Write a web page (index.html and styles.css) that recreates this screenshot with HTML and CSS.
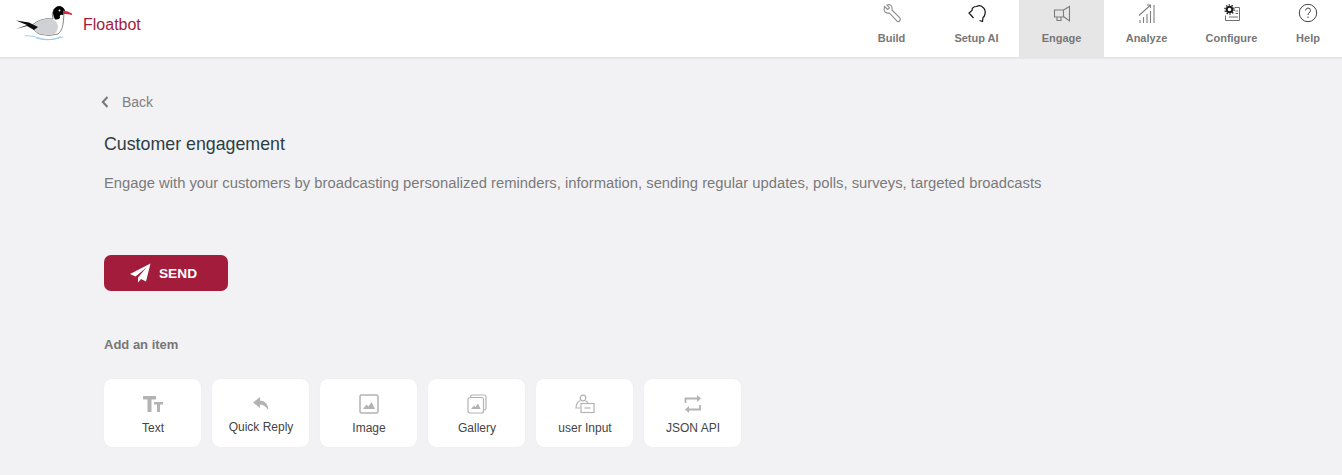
FILE: index.html
```html
<!DOCTYPE html>
<html lang="en">
<head>
<meta charset="utf-8">
<title>Floatbot</title>
<link rel="stylesheet" href="styles.css">
</head>
<body>
<header class="topbar">
  <div class="brand">
    <svg class="logo" width="58" height="42" viewBox="0 0 58 42">
      <path d="M38 19 Q36 14 39 9 L49 9 Q49 15 48.500 20 Q48 30 43 34 Q34 37 24 34 Q19 31 16 26 Q26 17 38 19 Z" fill="#fff" stroke="#555" stroke-width=".7"/>
      <path d="M17 27 Q24 18 35 19 Q42 20 43 26 Q43 31 39 34 Q33 36 26 34 Q20 32 17 27 Z" fill="#cfd1d4"/>
      <path d="M1 20.500 L14 22.500 L23 27 L19 30 L12 26 L1 29 L12 25 L7 23 Z" fill="#0c0c0c"/>
      <path d="M40 19.500 Q37 14 38.500 10 Q41 5.500 45 6 Q49 7 50 11 L48 15 Q44 14 45 18 Q43 20 40 19.500 Z" fill="#000"/>
      <circle cx="44.500" cy="10.500" r=".9" fill="#fff"/>
      <path d="M48 10.500 Q53 11 57 13.500 L57 15 Q52 13.500 48 14 Z" fill="#d92b3f"/>
      <path d="M10 35.500 Q20 36 26 38.500 Q36 41.500 46 36.500 M21 38 Q32 42 48 37" fill="none" stroke="#9cc8e6" stroke-width=".9"/>
    </svg>
    <span class="brand-name">Floatbot</span>
  </div>
  <nav class="nav">
    <a class="nav-item">
      <svg width="20" height="20" viewBox="0 0 20 20" fill="none" stroke="#8e8e8e" stroke-width="1.100">
        <path d="M2.500 3.500 L5.500 6.500 L7.500 5 L5 2 Q8 1 9.500 3 Q10.500 5 10 7 L18 15 Q19 17 17 18.500 Q15.500 19 15 18 L7.500 10 Q5 10.500 3 9 Q1.500 7 2.500 3.500 Z"/>
      </svg>
      <span>Build</span>
    </a>
    <a class="nav-item">
      <svg width="20" height="20" viewBox="0 0 20 20" fill="none" stroke="#151515" stroke-width="1.200">
        <path d="M6.500 15 L2 10 L5 7.500 Q5 3.500 9.500 3.500 Q13 1.500 15.500 4 Q19 6.500 18 11 Q17.500 13.500 16 14.500 L15.500 18.500 L12.500 17.500"/>
      </svg>
      <span>Setup AI</span>
    </a>
    <a class="nav-item is-active">
      <svg width="20" height="20" viewBox="0 0 20 20" fill="none" stroke="#7c7c7c" stroke-width="1.100">
        <path d="M2.500 7 H11.500 V14 H2.500 Z M5 14 V17.500 H9 V14 M11.500 7 L17.500 3.500 V18 L11.500 13.500"/>
      </svg>
      <span>Engage</span>
    </a>
    <a class="nav-item">
      <svg width="20" height="20" viewBox="0 0 20 20" fill="none" stroke="#808080" stroke-width="1.100">
        <path d="M2 12.500 L13 2.500 M10 2 H13.500 V5 M3 20 V17 M6.500 20 V14 M10 20 V11 M13.500 20 V8 M17 20 V2 " />
      </svg>
      <span>Analyze</span>
    </a>
    <a class="nav-item">
      <svg width="18" height="18" viewBox="0 0 18 18">
        <circle cx="6.500" cy="5.500" r="2.800" fill="none" stroke="#1a1a1a" stroke-width="2"/>
        <circle cx="6.500" cy="5.500" r="4.600" fill="none" stroke="#1a1a1a" stroke-width="1.300" stroke-dasharray="1.400 1.500"/>
        <path d="M2.500 11.500 V16.500 H16.500 V3.500 H12 M12.500 7 H15 M12.500 9.500 H15 M6 13 H15" fill="none" stroke="#707070" stroke-width="1"/>
      </svg>
      <span>Configure</span>
    </a>
    <a class="nav-item nav-help">
      <svg width="20" height="20" viewBox="0 0 20 20">
        <circle cx="10" cy="10" r="8.700" fill="none" stroke="#444" stroke-width="1"/>
        <path d="M7.500 7.500 Q8 5 10 5 Q12.500 5 12.500 7.500 Q12.500 9 11 9.800 Q10 10.500 10 12" fill="none" stroke="#444" stroke-width="1"/>
        <rect x="9.500" y="13.500" width="1" height="1.500" fill="#444"/>
      </svg>
      <span>Help</span>
    </a>
  </nav>
</header>
<main class="content">
  <a class="back">
    <svg width="8" height="12" viewBox="0 0 8 12" fill="none" stroke="#777" stroke-width="2"><path d="M6.500 1 L1.800 6 L6.500 11"/></svg>
    <span>Back</span>
  </a>
  <h1 class="title">Customer engagement</h1>
  <p class="lead">Engage with your customers by broadcasting personalized reminders, information, sending regular updates, polls, surveys, targeted broadcasts</p>
  <button class="send">
    <svg width="21" height="20" viewBox="0 0 21 20" fill="#fff"><path d="M20.500 .5 L0 11 L5.500 13.500 L16.500 4.500 L8 14.500 L8 19.500 L11 16 L16 18.500 Z"/></svg>
    <span>SEND</span>
  </button>
  <h2 class="add-title">Add an item</h2>
  <div class="items">
    <div class="item">
      <svg width="20" height="16" viewBox="0 0 20 16" fill="#b3b3b3"><path d="M0 0 H13 V3.500 H8.500 V16 H4.500 V3.500 H0 Z M11 6 H20 V8.500 H17 V16 H14 V8.500 H11 Z"/></svg>
      <span>Text</span>
    </div>
    <div class="item item-reply">
      <svg width="16" height="14" viewBox="0 0 16 14" fill="#b3b3b3"><path d="M7 0 L0 5.500 L7 11 V7.500 Q12 7.500 15.500 13.500 Q15 4 7 3.500 Z"/></svg>
      <span>Quick Reply</span>
    </div>
    <div class="item">
      <svg width="20" height="20" viewBox="0 0 20 20"><rect x="1" y="1" width="18" height="18" rx="1.500" fill="none" stroke="#b3b3b3" stroke-width="1.500"/><path d="M4 15 L7.500 10.500 L9.500 12.500 L12.500 8 L16 15 Z" fill="#b3b3b3"/></svg>
      <span>Image</span>
    </div>
    <div class="item">
      <svg width="20" height="20" viewBox="0 0 20 20" fill="none" stroke="#b3b3b3" stroke-width="1.200"><path d="M3.500 3 Q3.500 1 5.500 1 H17.500 Q19 1 19 3 V14.500 Q19 16 17 16"/><rect x="1" y="3.500" width="15.500" height="15.500" rx="2"/><path d="M4 15 L7 11.500 L8.500 13 L11 9.500 L13.500 15 Z" fill="#b3b3b3" stroke="none"/></svg>
      <span>Gallery</span>
    </div>
    <div class="item">
      <svg width="20" height="20" viewBox="0 0 20 20" fill="none" stroke="#b3b3b3" stroke-width="1.200"><circle cx="8" cy="4" r="2.800"/><path d="M5.500 6.500 Q1 8.500 1 14 H5.500 M10.500 6.500 Q12 7.500 13 9"/><rect x="6" y="9.500" width="13" height="9"/><path d="M9.500 14 H15.500"/></svg>
      <span>user Input</span>
    </div>
    <div class="item">
      <svg width="18" height="20" viewBox="0 0 18 20" fill="none" stroke="#b3b3b3" stroke-width="1.800"><path d="M1.500 9 V4.500 H15"/><path d="M13 1 L17 4.500 L13 8 Z" fill="#b3b3b3" stroke="none"/><path d="M16 11 V15.500 H3"/><path d="M5 12 L1 15.500 L5 19 Z" fill="#b3b3b3" stroke="none"/></svg>
      <span>JSON API</span>
    </div>
  </div>
</main>
</body>
</html>
```
FILE: styles.css
```css
* { box-sizing: border-box; }
html, body { margin: 0; height: 100%; }
body {
  background: #f2f2f5;
  font-family: "Liberation Sans", Arial, sans-serif;
  overflow: hidden;
}
.topbar {
  height: 58px;
  background: #fff;
  border-bottom: 1px solid #e3e3e6;
  box-shadow: 0 1px 1px rgba(0,0,0,.04);
  display: flex;
  justify-content: space-between;
}
.brand { display: flex; align-items: flex-start; padding-left: 15px; }
.logo { flex: none; }
.brand-name {
  color: #a31c3c;
  font-size: 16px;
  line-height: 18px;
  margin: 16px 0 0 10px;
}
.nav { display: flex; }
.nav-item {
  width: 85px;
  height: 57px;
  display: flex;
  flex-direction: column;
  align-items: center;
  padding-top: 3px;
  color: #777;
  font-size: 11px;
  font-weight: 700;
  line-height: 13px;
}
.nav-item svg { height: 20px; flex: none; }
.nav-item span { margin-top: 9px; }
.nav-item.is-active { background: #e6e6e6; }
.nav-help { width: 68px; }
.content { padding: 36px 0 0 104px; }
.back {
  display: flex;
  align-items: center;
  gap: 13px;
  margin-left: -3px;
  color: #808080;
  font-size: 14px;
  line-height: 16px;
}
.title {
  margin: 24px 0 0;
  color: #2c3e44;
  font-size: 17.800px;
  font-weight: 400;
  line-height: 21px;
}
.lead {
  margin: 19px 0 0;
  color: #7a7a7a;
  font-size: 14.790px;
  line-height: 18px;
}
.send {
  margin-top: 63px;
  width: 124px;
  height: 36px;
  border: 0;
  border-radius: 7px;
  background: #a31c3c;
  color: #fff;
  font: 700 13.700px "Liberation Sans", Arial, sans-serif;
  display: flex;
  align-items: center;
  justify-content: center;
  gap: 8px;
  padding: 0 5px 0 0;
}
.add-title {
  margin: 46px 0 0;
  color: #777;
  font-size: 13px;
  font-weight: 700;
  line-height: 15px;
}
.items { display: flex; gap: 11px; margin-top: 27px; }
.item {
  width: 97px;
  height: 68px;
  background: #fff;
  border-radius: 8px;
  box-shadow: 0 0 1px rgba(0,0,0,.08);
  display: flex;
  flex-direction: column;
  align-items: center;
  padding: 15px 0 0 1px;
  color: #444;
  font-size: 12px;
  line-height: 14px;
}
.item svg { height: 20px; flex: none; }
.item span { margin-top: 7px; }
.item-reply span { margin-top: 6px; }
```
